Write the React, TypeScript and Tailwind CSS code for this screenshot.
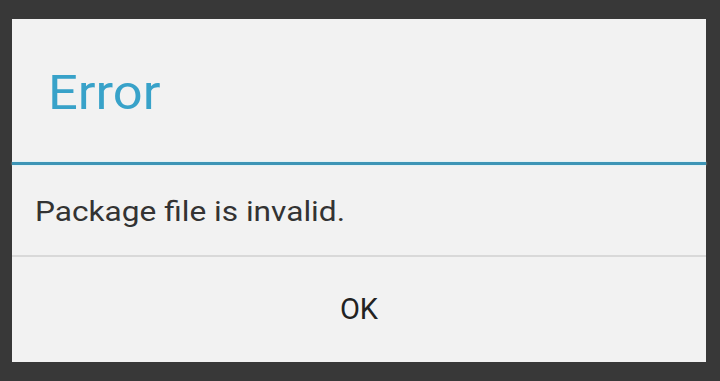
const App = () => {
  return (
    <div className="w-[720px] h-[381px] bg-[#383838] pt-[19px] pl-[12px] overflow-hidden" style={{ fontFamily: "Roboto, 'Liberation Sans', sans-serif" }}>
      <div className="w-[694px] h-[343px] bg-[#f2f2f2] flex flex-col">
        <div className="h-[143px] flex items-center pl-[36px] pt-[3px]">
          <h1 className="text-[49px] leading-none text-[#38a2c9] origin-left scale-x-[1.07]">Error</h1>
        </div>
        <div className="h-[3px] bg-[#3d95b6] shadow-[0_0_2px_#bff4ff]" />
        <div className="h-[90px] flex items-center pl-[23px] pt-[4px]">
          <p className="text-[28px] leading-none text-[#333333] origin-left scale-x-[1.13]">Package file is invalid.</p>
        </div>
        <div className="h-[2px] bg-[#d9d9d9]" />
        <button className="flex-1 flex items-center justify-center text-[29px] leading-none text-[#222222]">
          OK
        </button>
      </div>
    </div>
  );
};

export default App;
